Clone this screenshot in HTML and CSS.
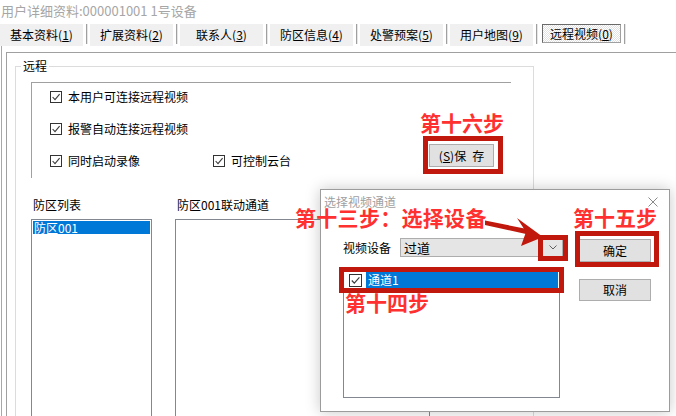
FILE: index.html
```html
<!DOCTYPE html>
<html lang="zh-CN">
<head>
<meta charset="utf-8">
<title>用户详细资料</title>
<link rel="stylesheet" href="styles.css">
</head>
<body>
<div class="title">用户详细资料:000001001 1号设备</div>
<div class="tabs">
  <div class="tab">基本资料(<u>1</u>)</div><span class="sep"></span>
  <div class="tab">扩展资料(<u>2</u>)</div><span class="sep"></span>
  <div class="tab">联系人(<u>3</u>)</div><span class="sep"></span>
  <div class="tab">防区信息(<u>4</u>)</div><span class="sep"></span>
  <div class="tab">处警预案(<u>5</u>)</div><span class="sep"></span>
  <div class="tab">用户地图(<u>9</u>)</div><span class="sep"></span>
  <div class="tab active">远程视频(<u>0</u>)</div><span class="sep"></span>
</div>
<div class="frame">
  <div class="panel">
    <fieldset class="group">
      <legend>远程</legend>
      <div class="opts">
        <div class="row">
          <label class="cb"><span class="box"><svg viewBox="0 0 10 10" width="10" height="10"><polyline points="1.6,5 4,7.6 8.6,2.2" fill="none" stroke="#3c3c3c" stroke-width="1.1"/></svg></span>本用户可连接远程视频</label>
        </div>
        <div class="row">
          <label class="cb"><span class="box"><svg viewBox="0 0 10 10" width="10" height="10"><polyline points="1.6,5 4,7.6 8.6,2.2" fill="none" stroke="#3c3c3c" stroke-width="1.1"/></svg></span>报警自动连接远程视频</label>
        </div>
        <div class="row row3">
          <label class="cb cb-a"><span class="box"><svg viewBox="0 0 10 10" width="10" height="10"><polyline points="1.6,5 4,7.6 8.6,2.2" fill="none" stroke="#3c3c3c" stroke-width="1.1"/></svg></span>同时启动录像</label>
          <label class="cb cb-b"><span class="box"><svg viewBox="0 0 10 10" width="10" height="10"><polyline points="1.6,5 4,7.6 8.6,2.2" fill="none" stroke="#3c3c3c" stroke-width="1.1"/></svg></span>可控制云台</label>
          <button class="btn save">(<u>S</u>)保&ensp;存</button>
        </div>
      </div>
      <div class="lower">
        <div class="col col1">
          <div class="lbl">防区列表</div>
          <div class="list"><div class="item sel">防区001</div></div>
        </div>
        <div class="col col2">
          <div class="lbl">防区001联动通道</div>
          <div class="list"></div>
        </div>
      </div>
    </fieldset>
  </div>
</div>

<div class="dlg">
  <div class="dlg-title">
    <span>选择视频通道</span>
    <svg class="close" viewBox="0 0 10 10" width="10" height="10"><path d="M0.5 0.5 L9.5 9.5 M9.5 0.5 L0.5 9.5" stroke="#8a8a8a" stroke-width="1" fill="none"/></svg>
  </div>
  <div class="dlg-body">
    <div class="dlg-left">
      <div class="dev-row">
        <span class="dev-lbl">视频设备</span>
        <div class="combo"><span>过道</span><svg viewBox="0 0 8 5" width="8" height="5"><polyline points="0.5,0.5 4,4 7.5,0.5" fill="none" stroke="#606060" stroke-width="1"/></svg></div>
      </div>
      <div class="chlist">
        <div class="chrow">
          <span class="box big"><svg viewBox="0 0 11 11" width="11" height="11"><polyline points="1.8,5.5 4.3,8.2 9.4,2.4" fill="none" stroke="#3c3c3c" stroke-width="1.2"/></svg></span>
          <span class="chsel">通道1</span>
        </div>
      </div>
    </div>
    <div class="dlg-right">
      <button class="btn ok">确定</button>
      <button class="btn cancel">取消</button>
    </div>
  </div>
</div>

<div class="note n16">第十六步</div>
<div class="rbox rb-save"></div>
<div class="note n13">第十三步：选择设备</div>
<div class="note n15">第十五步</div>
<div class="note n14">第十四步</div>
<div class="rbox rb-arrow"></div>
<div class="rbox rb-ok"></div>
<div class="rbox rb-row"></div>
<svg class="arrow" viewBox="480 210 70 40" width="70" height="40">
  <polygon points="485,220.5 527,229 526,234 485,225" fill="#c0180c"/>
  <polygon points="517,218 543,237 521,246 526,232" fill="#c0180c"/>
</svg>
</body>
</html>
```

FILE: styles.css
```css
* { box-sizing: border-box; }
html, body { margin: 0; padding: 0; background: #fff; overflow: hidden; }
body {
  position: relative;
  width: 676px;
  height: 416px;
  font-family: "Noto Sans CJK SC", "Noto Sans", sans-serif;
  font-size: 12px;
  line-height: 16px;
  color: #000;
}
u { text-decoration: underline; text-underline-offset: 1px; }

.title {
  height: 22px;
  line-height: 22px;
  font-size: 13px;
  color: #a6a6a6;
  padding-left: 1px;
  white-space: nowrap;
}

.tabs {
  display: flex;
  align-items: flex-start;
  height: 24px;
  padding-top: 2px;
}
.tab {
  width: 83px;
  height: 22px;
  line-height: 22px;
  background: #f0f0f0;
  text-align: center;
  white-space: nowrap;
}
.tab.active {
  width: 79px;
  height: 19px;
  line-height: 17px;
  margin-left: 2px;
  border: 1px solid #a0a0a0;
  border-left-color: #6a6a6a;
  border-top-color: #6a6a6a;
  background-color: #fff;
  background-image: conic-gradient(#e2e2e2 25%, #fff 0 50%, #e2e2e2 0 75%, #fff 0);
  background-size: 2px 2px;
}
.sep {
  width: 2px;
  height: 20px;
  border-left: 1px solid #a0a0a0;
  border-right: 1px solid #e6e6e6;
  margin: 0 2px 0 3px;
}

.frame {
  margin-left: 1px;
  border-left: 1px solid #a8a8a8;
  padding: 6px 0 0 4px;
  height: 370px;
}
.panel {
  border-top: 1px solid #a0a0a0;
  border-left: 1px solid #a0a0a0;
  height: 364px;
}

.group {
  margin: 5px 0 0 8px;
  padding: 0;
  width: 519px;
  height: 358px;
  min-width: 0;
  border: 1px solid #dcdcdc;
  border-bottom: 0;
}
.group legend {
  margin-left: 5px;
  padding: 0 2px;
  line-height: 16px;
}

.opts {
  margin: 8px 0 0 15px;
  width: 480px;
  height: 96px;
  border-top: 1px solid #a0a0a0;
  border-left: 1px solid #a0a0a0;
  padding: 6px 0 0 18px;
  display: flex;
  flex-direction: column;
  gap: 16px;
}
.row {
  display: flex;
  align-items: flex-start;
  height: 16px;
}
.cb {
  display: flex;
  align-items: center;
  height: 16px;
  white-space: nowrap;
}
.cb-a { width: 163px; }
.cb-b { width: 216px; }
.box {
  width: 12px;
  height: 12px;
  border: 1px solid #333;
  background: #fff;
  margin-right: 6px;
  display: flex;
  align-items: center;
  justify-content: center;
  flex: none;
}
.box svg { display: block; }

.btn {
  font-family: inherit;
  font-size: 12px;
  color: #000;
  background: #e1e1e1;
  border: 1px solid #adadad;
  padding: 0;
  margin: 0;
  line-height: 16px;
  white-space: nowrap;
}
.save {
  width: 65px;
  height: 23px;
  margin-top: -9px;
}

.lower {
  display: flex;
  gap: 23px;
  margin: 19px 0 0 15px;
}
.col1 { width: 121px; }
.col2 { width: 255px; }
.lbl {
  padding-left: 2px;
  line-height: 16px;
  white-space: nowrap;
}
.list {
  margin-top: 6px;
  height: 197px;
  border: 1px solid #828790;
  border-bottom: 0;
  padding: 1px;
}
.item {
  height: 13px;
  line-height: 13px;
  padding-left: 1px;
}
.item.sel {
  background: #0078d7;
  color: #fff;
}

.dlg {
  position: absolute;
  left: 320px;
  top: 189px;
  width: 350px;
  height: 223px;
  border: 1px solid #9c9c9c;
  background: #fff;
  box-shadow: 0 0 14px rgba(0, 0, 0, 0.22);
}
.dlg-title {
  height: 24px;
  line-height: 24px;
  padding: 0 11px 0 3px;
  color: #a0a0a0;
  display: flex;
  justify-content: space-between;
  align-items: center;
}
.close { display: block; }
.dlg-body {
  display: flex;
  padding: 24px 0 0 22px;
}
.dlg-left { width: 221px; }
.dev-row {
  display: flex;
  height: 19px;
}
.dev-lbl {
  width: 57px;
  line-height: 19px;
  white-space: nowrap;
}
.combo {
  width: 163px;
  height: 19px;
  background: #e5e5e5;
  border: 1px solid #adadad;
  display: flex;
  align-items: center;
  justify-content: space-between;
  padding: 0 5px 0 3px;
  font-size: 13px;
}
.combo svg { display: block; }
.chlist {
  margin-top: 11px;
  width: 217px;
  height: 130px;
  border: 1px solid #828790;
  padding: 3px 1px 0 0;
}
.chrow {
  display: flex;
  align-items: center;
  height: 16px;
}
.box.big {
  width: 13px;
  height: 13px;
  margin: 0 0 0 5px;
}
.chsel {
  flex: 1;
  margin-left: 4px;
  height: 16px;
  line-height: 16px;
  background: #0078d7;
  color: #fff;
  padding-left: 2px;
}
.dlg-right {
  margin-left: 15px;
  display: flex;
  flex-direction: column;
}
.ok {
  width: 72px;
  height: 23px;
  margin-top: 1px;
}
.cancel {
  width: 72px;
  height: 22px;
  margin-top: 17px;
}

.note {
  position: absolute;
  font-size: 21px;
  line-height: 21px;
  font-weight: 700;
  color: #ff3030;
  white-space: nowrap;
}
.n16 { left: 420px; top: 112px; }
.n13 { left: 295px; top: 207px; letter-spacing: 0.3px; }
.n15 { left: 573px; top: 207px; }
.n14 { left: 345px; top: 292px; }

.rbox {
  position: absolute;
  border: 5px solid #c0180c;
}
.rb-save { left: 423px; top: 136px; width: 80px; height: 38px; }
.rb-arrow { left: 538px; top: 235px; width: 30px; height: 26px; }
.rb-ok { left: 575px; top: 231px; width: 84px; height: 36px; }
.rb-row { left: 339px; top: 267px; width: 225px; height: 26px; }

.arrow {
  position: absolute;
  left: 480px;
  top: 210px;
  display: block;
}
```
